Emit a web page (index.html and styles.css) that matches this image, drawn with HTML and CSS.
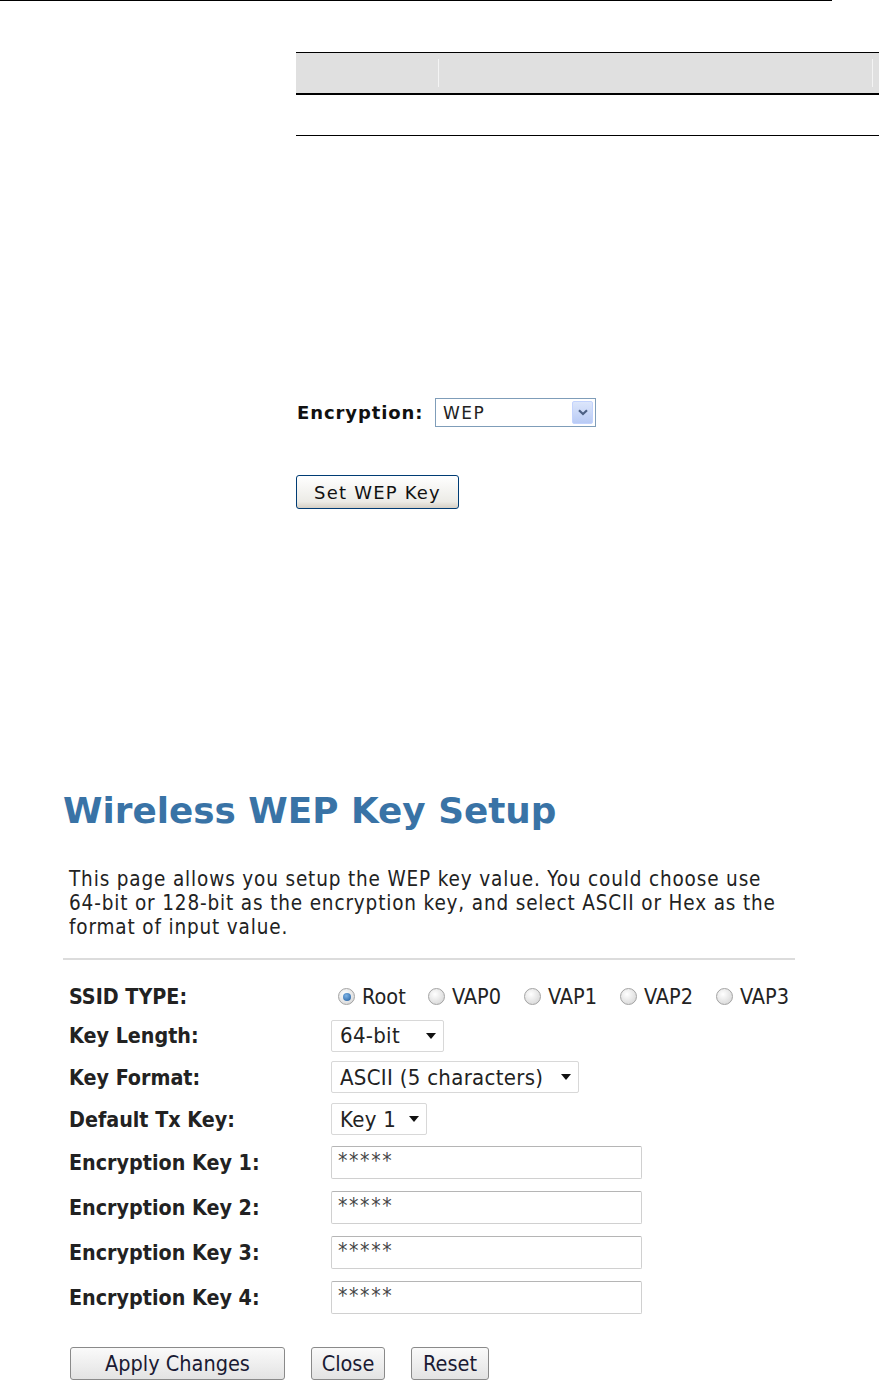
FILE: index.html
```html
<!DOCTYPE html>
<html>
<head>
<meta charset="utf-8">
<link rel="stylesheet" href="styles.css">
</head>
<body>
<div class="page-rule"></div>

<div class="doc-table">
  <div class="doc-head">
    <div class="doc-cell doc-cell-first"></div>
    <div class="doc-cell doc-cell-second"></div>
  </div>
  <div class="doc-row"></div>
</div>

<div class="enc-block">
  <div class="enc-row">
    <span class="enc-label">Encryption:</span>
    <div class="xp-select">
      <span class="xp-select-text">WEP</span>
      <span class="xp-select-btn">
        <svg width="10" height="7" viewBox="0 0 10 7"><path d="M1 1.2 L5 5 L9 1.2" fill="none" stroke="#4d6185" stroke-width="2.2"/></svg>
      </span>
    </div>
  </div>
  <button class="xp-button">Set WEP Key</button>
</div>

<div class="wep">
  <h1 class="wep-title">Wireless WEP Key Setup</h1>
  <p class="wep-intro">This page allows you setup the WEP key value. You could choose use 64-bit or 128-bit as the encryption key, and select ASCII or Hex as the format of input value.</p>
  <div class="wep-hr"></div>

  <div class="wep-form">
    <div class="wep-label">SSID TYPE:</div>
    <div class="radio-group">
      <span class="radio-item radio-item-root"><span class="radio radio-on"></span>Root</span>
      <span class="radio-item"><span class="radio"></span>VAP0</span>
      <span class="radio-item"><span class="radio"></span>VAP1</span>
      <span class="radio-item"><span class="radio"></span>VAP2</span>
      <span class="radio-item"><span class="radio"></span>VAP3</span>
    </div>

    <div class="wep-label">Key Length:</div>
    <div><span class="dd dd-len">64-bit<span class="dd-arrow"></span></span></div>

    <div class="wep-label">Key Format:</div>
    <div><span class="dd dd-fmt">ASCII (5 characters)<span class="dd-arrow"></span></span></div>

    <div class="wep-label">Default Tx Key:</div>
    <div><span class="dd dd-key">Key 1<span class="dd-arrow"></span></span></div>

    <div class="wep-label">Encryption Key 1:</div>
    <div><span class="key-input">*****</span></div>

    <div class="wep-label">Encryption Key 2:</div>
    <div><span class="key-input">*****</span></div>

    <div class="wep-label">Encryption Key 3:</div>
    <div><span class="key-input">*****</span></div>

    <div class="wep-label">Encryption Key 4:</div>
    <div><span class="key-input">*****</span></div>
  </div>

  <div class="wep-actions">
    <button class="btn btn-apply">Apply Changes</button>
    <button class="btn btn-close">Close</button>
    <button class="btn btn-reset">Reset</button>
  </div>
</div>
</body>
</html>
```

FILE: styles.css
```css
html, body {
  margin: 0;
  padding: 0;
  background: #ffffff;
}
body {
  width: 879px;
  height: 1388px;
  overflow: hidden;
  font-family: "DejaVu Sans", Verdana, sans-serif;
  color: #000;
}

.page-rule {
  width: 832px;
  height: 1px;
  background: #000;
}

/* document table */
.doc-table {
  margin: 51px 0 0 296px;
  width: 583px;
}
.doc-head {
  display: flex;
  background: #e0e0e0;
  border-top: 1px solid #000;
  border-bottom: 2px solid #000;
  padding: 6px 0;
  box-sizing: content-box;
  height: 28px;
}
.doc-cell {
  height: 28px;
}
.doc-cell-first {
  width: 142px;
  border-right: 1px solid #f4f4f4;
}
.doc-cell-second {
  width: 433px;
  border-right: 1px solid #f4f4f4;
}
.doc-row {
  height: 40px;
  border-bottom: 1px solid #000;
}

/* encryption block */
.enc-block {
  margin: 262px 0 0 297px;
}
.enc-row {
  display: flex;
  align-items: center;
  height: 29px;
}
.enc-label {
  font-weight: bold;
  font-size: 18px;
  letter-spacing: 0.9px;
  color: #111;
  width: 138px;
}
.xp-select {
  display: flex;
  align-items: center;
  justify-content: space-between;
  width: 159px;
  height: 27px;
  border: 1px solid #7f9db9;
  background: #fff;
}
.xp-select-text {
  font-size: 17px;
  letter-spacing: 1.5px;
  padding-left: 7px;
  color: #222;
}
.xp-select-btn {
  display: flex;
  align-items: center;
  justify-content: center;
  width: 21px;
  height: 23px;
  margin-right: 2px;
  border-radius: 2px;
  background: linear-gradient(#dce6fb, #b9cbf5);
  border: 1px solid #c3d3fd;
  box-sizing: border-box;
}
.xp-button {
  display: block;
  margin: 48px 0 0 -1px;
  width: 163px;
  height: 34px;
  font-family: "DejaVu Sans", Verdana, sans-serif;
  font-size: 18px;
  letter-spacing: 1.2px;
  color: #111;
  background: linear-gradient(#ffffff, #ecebe6 80%, #d6d0c5);
  border: 1px solid #003c74;
  border-radius: 3px;
  padding: 0;
}

/* WEP setup panel */
.wep {
  margin: 0 0 0 63px;
  padding-top: 280px;
}
.wep-title {
  margin: 0;
  font-family: "DejaVu Sans", Verdana, sans-serif;
  font-size: 35.8px;
  font-weight: bold;
  color: #3973a6;
  line-height: 44px;
}
.wep-intro {
  margin: 34px 0 0 6px;
  width: 725px;
  font-family: "DejaVu Sans Condensed", Tahoma, sans-serif;
  font-size: 20.5px;
  letter-spacing: 0.85px;
  line-height: 24px;
  color: #222;
}
.wep-hr {
  margin-top: 19px;
  width: 732px;
  height: 2px;
  background: #dcdcdc;
}

.wep-form {
  margin: 18px 0 0 6px;
  display: grid;
  grid-template-columns: 262px auto;
  grid-template-rows: 37px 41px 42px 42px 44px 46px 45px 45px;
  align-items: center;
}
.wep-label {
  font-family: "DejaVu Sans Condensed", Tahoma, sans-serif;
  font-weight: bold;
  font-size: 21.3px;
  color: #222;
}

.radio-group {
  display: flex;
  align-items: center;
  padding-left: 7px;
  font-family: "DejaVu Sans Condensed", Tahoma, sans-serif;
  font-size: 21.5px;
  color: #222;
}
.radio-item {
  display: flex;
  align-items: center;
  width: 96px;
}
.radio-item-root {
  width: 90px;
}
.radio {
  width: 17px;
  height: 17px;
  border-radius: 50%;
  box-sizing: border-box;
  border: 1px solid #a3a3a3;
  background: radial-gradient(circle at 40% 35%, #ffffff, #d0d0d0);
  margin-right: 7px;
  position: relative;
}
.radio-on::after {
  content: "";
  position: absolute;
  left: 3.5px;
  top: 3.5px;
  width: 8px;
  height: 8px;
  border-radius: 50%;
  background: radial-gradient(circle at 40% 35%, #7fb4e6, #1d5a9c);
}

.dd {
  display: inline-flex;
  align-items: center;
  height: 32px;
  box-sizing: border-box;
  border: 1px solid #d8d8d8;
  border-radius: 2px;
  padding-left: 8px;
  font-family: "DejaVu Sans Condensed", Tahoma, sans-serif;
  font-size: 22px;
  letter-spacing: 0.3px;
  color: #222;
  background: #fff;
}
.dd-len { width: 113px; }
.dd-fmt { width: 248px; }
.dd-key { width: 96px; }
.dd-arrow {
  margin-left: auto;
  margin-right: 7px;
  width: 0;
  height: 0;
  border-left: 5px solid transparent;
  border-right: 5px solid transparent;
  border-top: 6px solid #111;
}

.key-input {
  display: flex;
  align-items: flex-start;
  width: 311px;
  height: 33px;
  box-sizing: border-box;
  border: 1px solid #d0d0d0;
  border-top-color: #b5b5b5;
  border-radius: 2px;
  padding: 2px 0 0 6px;
  font-family: "DejaVu Sans Condensed", Tahoma, sans-serif;
  font-size: 21px;
  letter-spacing: 1.6px;
  color: #444;
}

.wep-actions {
  display: flex;
  margin: 27px 0 0 7px;
}
.btn {
  height: 33px;
  font-family: "DejaVu Sans Condensed", Tahoma, sans-serif;
  font-size: 21.5px;
  color: #1a1a33;
  background: linear-gradient(#fafafa, #e3e3e3);
  border: 1px solid #8a8a8a;
  border-radius: 3px;
  padding: 0;
  margin-right: 26px;
}
.btn-apply { width: 215px; }
.btn-close { width: 74px; }
.btn-reset { width: 78px; }
```
